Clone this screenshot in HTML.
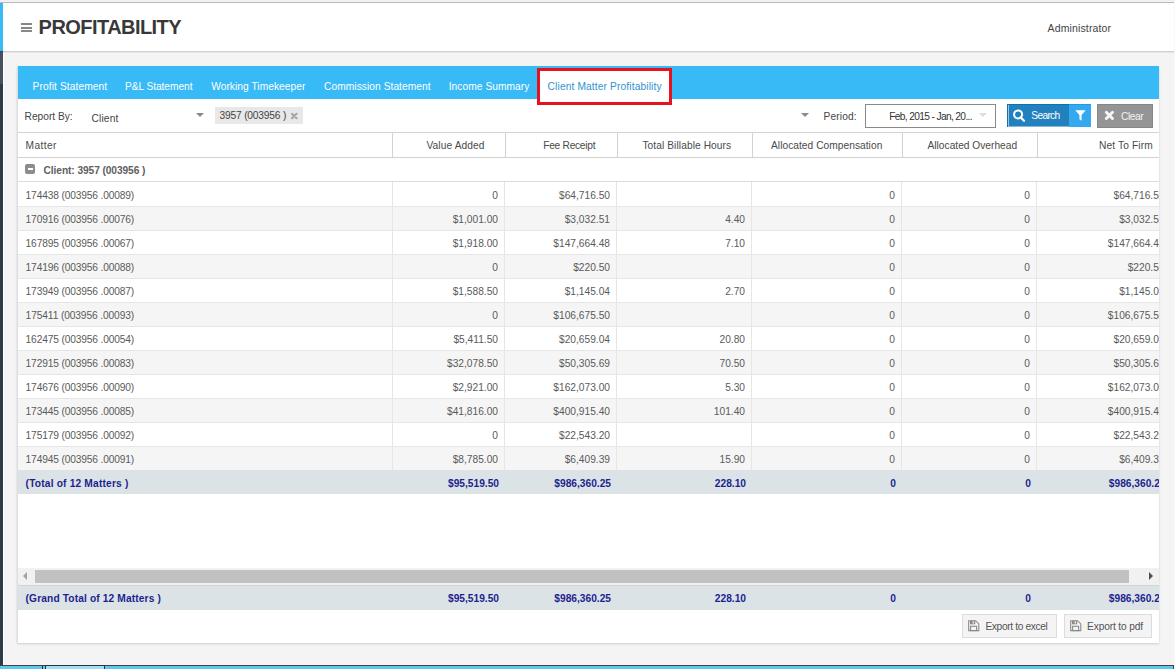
<!DOCTYPE html>
<html><head><meta charset="utf-8">
<style>
*{margin:0;padding:0;box-sizing:border-box}
html,body{width:1175px;height:669px;overflow:hidden}
body{background:#f4f4f4;font-family:"Liberation Sans",sans-serif;position:relative;color:#555}
.a{position:absolute}
.t{position:absolute;white-space:nowrap;font-size:10.2px;line-height:12px}
.g{position:absolute;left:18px;top:0;width:1141px;height:669px;overflow:hidden}
.g .t{}
</style></head><body>

<div class="a" style="left:0px;top:0px;width:1175px;height:1px;background:#f0f0f0"></div>
<div class="a" style="left:0px;top:1px;width:1175px;height:1px;background:#f5f5f5"></div>
<div class="a" style="left:0px;top:2px;width:1175px;height:1px;background:#b9b8ba"></div>
<div class="a" style="left:3px;top:3px;width:1172px;height:48px;background:#fff"></div>
<div class="a" style="left:3px;top:51px;width:1172px;height:1px;background:#d0d0d0"></div>
<div class="a" style="left:3px;top:52px;width:1172px;height:1px;background:#e6e6e6"></div>
<div class="a" style="left:0px;top:3px;width:3px;height:48px;background:#37baf5"></div>
<div class="a" style="left:0px;top:51px;width:3px;height:1px;background:#3b404c"></div>
<div class="a" style="left:0px;top:52px;width:3px;height:32px;background:#46525f"></div>
<div class="a" style="left:0px;top:84px;width:3px;height:581px;background:#2d3a47"></div>
<div class="a" style="left:3px;top:53px;width:1px;height:612px;background:#fff"></div>
<div class="a" style="left:20.5px;top:23px;width:11px;height:2px;background:#888"></div>
<div class="a" style="left:20.5px;top:27px;width:11px;height:2px;background:#888"></div>
<div class="a" style="left:20.5px;top:30px;width:11px;height:2px;background:#888"></div>
<div class="a" style="left:17px;top:66px;width:1142px;height:577px;background:#fff;box-shadow:0 1px 2px rgba(0,0,0,.16)"></div>
<div class="a" style="left:17px;top:66px;width:1px;height:577px;background:#dedede"></div>
<div class="a" style="left:18px;top:66px;width:1141px;height:33px;background:#37baf5"></div>
<div class="a" style="left:537px;top:68px;width:135px;height:37px;background:#fff;border:3px solid #e5131d"></div>
<div class="a" style="left:196px;top:113px;width:0;height:0;border-left:4px solid transparent;border-right:4px solid transparent;border-top:4px solid #8a8a8a"></div>
<div class="a" style="left:215px;top:107px;width:88px;height:17px;background:#e8e8e8"></div>
<svg class="a" style="left:290px;top:112px" width="9" height="8" viewBox="0 0 9 8"><path d="M2 1.8 L6.6 6.2 M6.6 1.8 L2 6.2" stroke="#a6a6a6" stroke-width="2.2" stroke-linecap="round"/></svg>
<div class="a" style="left:801px;top:113px;width:0;height:0;border-left:4px solid transparent;border-right:4px solid transparent;border-top:4px solid #8a8a8a"></div>
<div class="a" style="left:865px;top:104px;width:131px;height:24px;background:#fff;border:1px solid #8a8a8a"></div>
<div class="a" style="left:979px;top:113px;width:0;height:0;border-left:4px solid transparent;border-right:4px solid transparent;border-top:4px solid #dcdcdc"></div>
<div class="a" style="left:1007px;top:104px;width:62px;height:23px;background:#2180be"></div>
<div class="a" style="left:1007px;top:104px;width:1px;height:23px;background:#1b6da6"></div>
<div class="a" style="left:1008px;top:105px;width:1px;height:21px;background:rgba(255,255,255,.55)"></div>
<div class="a" style="left:1008px;top:126px;width:61px;height:1px;background:rgba(255,255,255,.45)"></div>
<div class="a" style="left:1007px;top:104px;width:62px;height:1px;background:#1a6fab"></div>
<svg class="a" style="left:1012px;top:109px" width="14" height="13" viewBox="0 0 14 13"><circle cx="6.1" cy="5.4" r="4" fill="none" stroke="#fff" stroke-width="2"/><line x1="8.5" y1="8.3" x2="12" y2="11.8" stroke="#fff" stroke-width="2.2" stroke-linecap="round"/></svg>
<div class="a" style="left:1069px;top:104px;width:22px;height:23px;background:#33aaf0"></div>
<div class="a" style="left:1069px;top:104px;width:22px;height:1px;background:#1d9be9"></div>
<svg class="a" style="left:1075px;top:109.6px" width="11" height="11" viewBox="0 0 11 11"><path d="M0.3 0.3 H10.7 L6.6 5 V10.7 L4.4 9.2 V5 Z" fill="#fff"/></svg>
<div class="a" style="left:1097px;top:104px;width:56px;height:24px;background:#959595;border:1px solid #878787"></div>
<svg class="a" style="left:1104px;top:110.3px" width="11" height="11" viewBox="0 0 11 11"><path d="M2.3 2.3 L8.5 8.5 M8.5 2.3 L2.3 8.5" stroke="#f6f6f6" stroke-width="2.9" stroke-linecap="round"/></svg>
<div class="a" style="left:962px;top:614px;width:95px;height:24px;background:#f4f4f4;border:1px solid #dcdcdc"></div>
<svg class="a" style="left:968px;top:620.3px" width="12" height="12" viewBox="0 0 12 12"><path d="M0.7 0.7 H7.6 L10.8 3.9 V10.6 H0.7 Z" fill="none" stroke="#8a8a8a" stroke-width="1.1"/><rect x="2" y="0.7" width="5.2" height="3.6" fill="#8a8a8a"/><rect x="4.6" y="1.3" width="1.3" height="2.2" fill="#f4f4f4"/><rect x="2.6" y="6.3" width="6" height="4.3" fill="none" stroke="#8a8a8a" stroke-width="1.1"/></svg>
<div class="a" style="left:1064px;top:614px;width:88px;height:24px;background:#f4f4f4;border:1px solid #dcdcdc"></div>
<svg class="a" style="left:1070px;top:620.3px" width="12" height="12" viewBox="0 0 12 12"><path d="M0.7 0.7 H7.6 L10.8 3.9 V10.6 H0.7 Z" fill="none" stroke="#8a8a8a" stroke-width="1.1"/><rect x="2" y="0.7" width="5.2" height="3.6" fill="#8a8a8a"/><rect x="4.6" y="1.3" width="1.3" height="2.2" fill="#f4f4f4"/><rect x="2.6" y="6.3" width="6" height="4.3" fill="none" stroke="#8a8a8a" stroke-width="1.1"/></svg>
<div class="a" style="left:0px;top:665px;width:1174px;height:1px;background:#3f4347"></div>
<div class="a" style="left:0px;top:666px;width:1175px;height:3px;background:#5ec8ea"></div>
<div class="a" style="left:1173px;top:665px;width:1px;height:4px;background:#444"></div>
<div class="a" style="left:1174px;top:0px;width:1px;height:669px;background:#f9f9f9"></div>
<div class="a" style="left:42px;top:666px;width:1px;height:3px;background:#2a3340"></div>
<div class="a" style="left:45px;top:665px;width:60px;height:4px;background:#9fe0f5;border:1px solid #2a3340;border-bottom:none"></div>
<div class="t" style="left:38.60px;top:21px;font-size:20px;font-weight:bold;color:#383838;letter-spacing:-0.552px;line-height:12px">PROFITABILITY</div>
<div class="t" style="left:1047.60px;top:22px;font-size:10.5px;font-weight:normal;color:#444;letter-spacing:0.128px;">Administrator</div>
<div class="t" style="left:32.60px;top:81px;font-size:10.2px;font-weight:normal;color:#fff;letter-spacing:0.097px;">Profit Statement</div>
<div class="t" style="left:124.90px;top:81px;font-size:10.2px;font-weight:normal;color:#fff;letter-spacing:-0.046px;">P&amp;L Statement</div>
<div class="t" style="left:211.20px;top:81px;font-size:10.2px;font-weight:normal;color:#fff;letter-spacing:0.057px;">Working Timekeeper</div>
<div class="t" style="left:324.10px;top:81px;font-size:10.2px;font-weight:normal;color:#fff;letter-spacing:0.062px;">Commission Statement</div>
<div class="t" style="left:448.70px;top:81px;font-size:10.2px;font-weight:normal;color:#fff;letter-spacing:0.067px;">Income Summary</div>
<div class="t" style="left:547.60px;top:81px;font-size:10.2px;font-weight:normal;color:#2f93cf;letter-spacing:0.138px;">Client Matter Profitability</div>
<div class="t" style="left:24.60px;top:111px;font-size:10.2px;font-weight:normal;color:#444;letter-spacing:-0.016px;">Report By:</div>
<div class="t" style="left:91.60px;top:113px;font-size:10.2px;font-weight:normal;color:#444;letter-spacing:0.131px;">Client</div>
<div class="t" style="left:219.60px;top:110px;font-size:10.2px;font-weight:normal;color:#444;letter-spacing:-0.185px;">3957 (003956 )</div>
<div class="t" style="left:823.60px;top:111px;font-size:10.2px;font-weight:normal;color:#444;letter-spacing:0.120px;">Period:</div>
<div class="t" style="left:889.20px;top:111px;font-size:10.2px;font-weight:normal;color:#333;letter-spacing:-0.640px;">Feb, 2015 - Jan, 20...</div>
<div class="t" style="left:1031.30px;top:110px;font-size:10.2px;font-weight:normal;color:#fff;letter-spacing:-0.676px;">Search</div>
<div class="t" style="left:1121.10px;top:111px;font-size:10.2px;font-weight:normal;color:#f2f2f2;letter-spacing:-0.465px;">Clear</div>
<div class="t" style="left:985.40px;top:621px;font-size:10.2px;font-weight:normal;color:#555;letter-spacing:-0.349px;">Export to excel</div>
<div class="t" style="left:1087.10px;top:621px;font-size:10.2px;font-weight:normal;color:#555;letter-spacing:-0.147px;">Export to pdf</div>
<div class="g">
<div class="a" style="left:0px;top:132px;width:1160px;height:1px;background:#d2d2d2"></div>
<div class="a" style="left:0px;top:157px;width:1160px;height:1px;background:#d2d2d2"></div>
<div class="a" style="left:374px;top:133px;width:1px;height:24px;background:#d2d2d2"></div>
<div class="a" style="left:487px;top:133px;width:1px;height:24px;background:#d2d2d2"></div>
<div class="a" style="left:599px;top:133px;width:1px;height:24px;background:#d2d2d2"></div>
<div class="a" style="left:734px;top:133px;width:1px;height:24px;background:#d2d2d2"></div>
<div class="a" style="left:884px;top:133px;width:1px;height:24px;background:#d2d2d2"></div>
<div class="a" style="left:1019px;top:133px;width:1px;height:24px;background:#d2d2d2"></div>
<div class="a" style="left:0px;top:181px;width:1160px;height:1px;background:#dcdcdc"></div>
<div class="a" style="left:7px;top:164px;width:10px;height:10px;background:#8c8c8c;border-radius:2px"></div>
<div class="a" style="left:10px;top:168px;width:5px;height:2px;background:#fff"></div>
<div class="a" style="left:0px;top:182px;width:1160px;height:24px;background:#fff"></div>
<div class="a" style="left:0px;top:206px;width:1160px;height:1px;background:#e6e6e6"></div>
<div class="a" style="left:374px;top:182px;width:1px;height:24px;background:#e6e6e6"></div>
<div class="a" style="left:486px;top:182px;width:1px;height:24px;background:#e6e6e6"></div>
<div class="a" style="left:598px;top:182px;width:1px;height:24px;background:#e6e6e6"></div>
<div class="a" style="left:733px;top:182px;width:1px;height:24px;background:#e6e6e6"></div>
<div class="a" style="left:883px;top:182px;width:1px;height:24px;background:#e6e6e6"></div>
<div class="a" style="left:1018px;top:182px;width:1px;height:24px;background:#e6e6e6"></div>
<div class="a" style="left:0px;top:207px;width:1160px;height:23px;background:#f5f5f5"></div>
<div class="a" style="left:0px;top:230px;width:1160px;height:1px;background:#e6e6e6"></div>
<div class="a" style="left:374px;top:207px;width:1px;height:23px;background:#e6e6e6"></div>
<div class="a" style="left:486px;top:207px;width:1px;height:23px;background:#e6e6e6"></div>
<div class="a" style="left:598px;top:207px;width:1px;height:23px;background:#e6e6e6"></div>
<div class="a" style="left:733px;top:207px;width:1px;height:23px;background:#e6e6e6"></div>
<div class="a" style="left:883px;top:207px;width:1px;height:23px;background:#e6e6e6"></div>
<div class="a" style="left:1018px;top:207px;width:1px;height:23px;background:#e6e6e6"></div>
<div class="a" style="left:0px;top:231px;width:1160px;height:23px;background:#fff"></div>
<div class="a" style="left:0px;top:254px;width:1160px;height:1px;background:#e6e6e6"></div>
<div class="a" style="left:374px;top:231px;width:1px;height:23px;background:#e6e6e6"></div>
<div class="a" style="left:486px;top:231px;width:1px;height:23px;background:#e6e6e6"></div>
<div class="a" style="left:598px;top:231px;width:1px;height:23px;background:#e6e6e6"></div>
<div class="a" style="left:733px;top:231px;width:1px;height:23px;background:#e6e6e6"></div>
<div class="a" style="left:883px;top:231px;width:1px;height:23px;background:#e6e6e6"></div>
<div class="a" style="left:1018px;top:231px;width:1px;height:23px;background:#e6e6e6"></div>
<div class="a" style="left:0px;top:255px;width:1160px;height:23px;background:#f5f5f5"></div>
<div class="a" style="left:0px;top:278px;width:1160px;height:1px;background:#e6e6e6"></div>
<div class="a" style="left:374px;top:255px;width:1px;height:23px;background:#e6e6e6"></div>
<div class="a" style="left:486px;top:255px;width:1px;height:23px;background:#e6e6e6"></div>
<div class="a" style="left:598px;top:255px;width:1px;height:23px;background:#e6e6e6"></div>
<div class="a" style="left:733px;top:255px;width:1px;height:23px;background:#e6e6e6"></div>
<div class="a" style="left:883px;top:255px;width:1px;height:23px;background:#e6e6e6"></div>
<div class="a" style="left:1018px;top:255px;width:1px;height:23px;background:#e6e6e6"></div>
<div class="a" style="left:0px;top:279px;width:1160px;height:23px;background:#fff"></div>
<div class="a" style="left:0px;top:302px;width:1160px;height:1px;background:#e6e6e6"></div>
<div class="a" style="left:374px;top:279px;width:1px;height:23px;background:#e6e6e6"></div>
<div class="a" style="left:486px;top:279px;width:1px;height:23px;background:#e6e6e6"></div>
<div class="a" style="left:598px;top:279px;width:1px;height:23px;background:#e6e6e6"></div>
<div class="a" style="left:733px;top:279px;width:1px;height:23px;background:#e6e6e6"></div>
<div class="a" style="left:883px;top:279px;width:1px;height:23px;background:#e6e6e6"></div>
<div class="a" style="left:1018px;top:279px;width:1px;height:23px;background:#e6e6e6"></div>
<div class="a" style="left:0px;top:303px;width:1160px;height:23px;background:#f5f5f5"></div>
<div class="a" style="left:0px;top:326px;width:1160px;height:1px;background:#e6e6e6"></div>
<div class="a" style="left:374px;top:303px;width:1px;height:23px;background:#e6e6e6"></div>
<div class="a" style="left:486px;top:303px;width:1px;height:23px;background:#e6e6e6"></div>
<div class="a" style="left:598px;top:303px;width:1px;height:23px;background:#e6e6e6"></div>
<div class="a" style="left:733px;top:303px;width:1px;height:23px;background:#e6e6e6"></div>
<div class="a" style="left:883px;top:303px;width:1px;height:23px;background:#e6e6e6"></div>
<div class="a" style="left:1018px;top:303px;width:1px;height:23px;background:#e6e6e6"></div>
<div class="a" style="left:0px;top:327px;width:1160px;height:23px;background:#fff"></div>
<div class="a" style="left:0px;top:350px;width:1160px;height:1px;background:#e6e6e6"></div>
<div class="a" style="left:374px;top:327px;width:1px;height:23px;background:#e6e6e6"></div>
<div class="a" style="left:486px;top:327px;width:1px;height:23px;background:#e6e6e6"></div>
<div class="a" style="left:598px;top:327px;width:1px;height:23px;background:#e6e6e6"></div>
<div class="a" style="left:733px;top:327px;width:1px;height:23px;background:#e6e6e6"></div>
<div class="a" style="left:883px;top:327px;width:1px;height:23px;background:#e6e6e6"></div>
<div class="a" style="left:1018px;top:327px;width:1px;height:23px;background:#e6e6e6"></div>
<div class="a" style="left:0px;top:351px;width:1160px;height:23px;background:#f5f5f5"></div>
<div class="a" style="left:0px;top:374px;width:1160px;height:1px;background:#e6e6e6"></div>
<div class="a" style="left:374px;top:351px;width:1px;height:23px;background:#e6e6e6"></div>
<div class="a" style="left:486px;top:351px;width:1px;height:23px;background:#e6e6e6"></div>
<div class="a" style="left:598px;top:351px;width:1px;height:23px;background:#e6e6e6"></div>
<div class="a" style="left:733px;top:351px;width:1px;height:23px;background:#e6e6e6"></div>
<div class="a" style="left:883px;top:351px;width:1px;height:23px;background:#e6e6e6"></div>
<div class="a" style="left:1018px;top:351px;width:1px;height:23px;background:#e6e6e6"></div>
<div class="a" style="left:0px;top:375px;width:1160px;height:23px;background:#fff"></div>
<div class="a" style="left:0px;top:398px;width:1160px;height:1px;background:#e6e6e6"></div>
<div class="a" style="left:374px;top:375px;width:1px;height:23px;background:#e6e6e6"></div>
<div class="a" style="left:486px;top:375px;width:1px;height:23px;background:#e6e6e6"></div>
<div class="a" style="left:598px;top:375px;width:1px;height:23px;background:#e6e6e6"></div>
<div class="a" style="left:733px;top:375px;width:1px;height:23px;background:#e6e6e6"></div>
<div class="a" style="left:883px;top:375px;width:1px;height:23px;background:#e6e6e6"></div>
<div class="a" style="left:1018px;top:375px;width:1px;height:23px;background:#e6e6e6"></div>
<div class="a" style="left:0px;top:399px;width:1160px;height:23px;background:#f5f5f5"></div>
<div class="a" style="left:0px;top:422px;width:1160px;height:1px;background:#e6e6e6"></div>
<div class="a" style="left:374px;top:399px;width:1px;height:23px;background:#e6e6e6"></div>
<div class="a" style="left:486px;top:399px;width:1px;height:23px;background:#e6e6e6"></div>
<div class="a" style="left:598px;top:399px;width:1px;height:23px;background:#e6e6e6"></div>
<div class="a" style="left:733px;top:399px;width:1px;height:23px;background:#e6e6e6"></div>
<div class="a" style="left:883px;top:399px;width:1px;height:23px;background:#e6e6e6"></div>
<div class="a" style="left:1018px;top:399px;width:1px;height:23px;background:#e6e6e6"></div>
<div class="a" style="left:0px;top:423px;width:1160px;height:23px;background:#fff"></div>
<div class="a" style="left:0px;top:446px;width:1160px;height:1px;background:#e6e6e6"></div>
<div class="a" style="left:374px;top:423px;width:1px;height:23px;background:#e6e6e6"></div>
<div class="a" style="left:486px;top:423px;width:1px;height:23px;background:#e6e6e6"></div>
<div class="a" style="left:598px;top:423px;width:1px;height:23px;background:#e6e6e6"></div>
<div class="a" style="left:733px;top:423px;width:1px;height:23px;background:#e6e6e6"></div>
<div class="a" style="left:883px;top:423px;width:1px;height:23px;background:#e6e6e6"></div>
<div class="a" style="left:1018px;top:423px;width:1px;height:23px;background:#e6e6e6"></div>
<div class="a" style="left:0px;top:447px;width:1160px;height:23px;background:#f5f5f5"></div>
<div class="a" style="left:0px;top:470px;width:1160px;height:1px;background:#e6e6e6"></div>
<div class="a" style="left:374px;top:447px;width:1px;height:23px;background:#e6e6e6"></div>
<div class="a" style="left:486px;top:447px;width:1px;height:23px;background:#e6e6e6"></div>
<div class="a" style="left:598px;top:447px;width:1px;height:23px;background:#e6e6e6"></div>
<div class="a" style="left:733px;top:447px;width:1px;height:23px;background:#e6e6e6"></div>
<div class="a" style="left:883px;top:447px;width:1px;height:23px;background:#e6e6e6"></div>
<div class="a" style="left:1018px;top:447px;width:1px;height:23px;background:#e6e6e6"></div>
<div class="a" style="left:0px;top:470px;width:1160px;height:24px;background:#dce3e6"></div>
<div class="a" style="left:0px;top:568px;width:1160px;height:17px;background:#f1f1f1"></div>
<div class="a" style="left:17px;top:570px;width:1094px;height:13px;background:#c1c1c1"></div>
<div class="a" style="left:5px;top:572px;width:0;height:0;border-top:4px solid transparent;border-bottom:4px solid transparent;border-right:4px solid #a3a3a3"></div>
<div class="a" style="left:1131px;top:572px;width:0;height:0;border-top:4px solid transparent;border-bottom:4px solid transparent;border-left:4px solid #505050"></div>
<div class="a" style="left:0px;top:585px;width:1160px;height:1px;background:#d4d4d4"></div>
<div class="a" style="left:0px;top:586px;width:1160px;height:24px;background:#dce3e6"></div>
<div class="t" style="left:7.60px;top:140px;font-size:10.2px;font-weight:normal;color:#4a4a4a;letter-spacing:0.385px;">Matter</div>
<div class="t" style="right:674.39px;top:140px;font-size:10.2px;font-weight:normal;color:#4a4a4a;letter-spacing:0.107px;">Value Added</div>
<div class="t" style="right:563.76px;top:140px;font-size:10.2px;font-weight:normal;color:#4a4a4a;letter-spacing:-0.264px;">Fee Receipt</div>
<div class="t" style="right:427.72px;top:140px;font-size:10.2px;font-weight:normal;color:#4a4a4a;letter-spacing:0.084px;">Total Billable Hours</div>
<div class="t" style="right:276.66px;top:140px;font-size:10.2px;font-weight:normal;color:#4a4a4a;letter-spacing:0.041px;">Allocated Compensation</div>
<div class="t" style="right:141.89px;top:140px;font-size:10.2px;font-weight:normal;color:#4a4a4a;letter-spacing:0.007px;">Allocated Overhead</div>
<div class="t" style="right:6.17px;top:140px;font-size:10.2px;font-weight:normal;color:#4a4a4a;letter-spacing:0.135px;">Net To Firm</div>
<div class="t" style="left:25.60px;top:165px;font-size:10.2px;font-weight:bold;color:#606060;letter-spacing:-0.088px;">Client: 3957 (003956 )</div>
<div class="t" style="left:7.60px;top:190px;font-size:10.2px;font-weight:normal;color:#5a5a5a;letter-spacing:-0.143px;">174438 (003956 .00089)</div>
<div class="t" style="right:661.00px;top:190px;font-size:10.2px;font-weight:normal;color:#5a5a5a;">0</div>
<div class="t" style="right:549.00px;top:190px;font-size:10.2px;font-weight:normal;color:#5a5a5a;">$64,716.50</div>
<div class="t" style="right:264.00px;top:190px;font-size:10.2px;font-weight:normal;color:#5a5a5a;">0</div>
<div class="t" style="right:129.00px;top:190px;font-size:10.2px;font-weight:normal;color:#5a5a5a;">0</div>
<div class="t" style="right:-5.50px;top:190px;font-size:10.2px;font-weight:normal;color:#5a5a5a;">$64,716.50</div>
<div class="t" style="left:7.60px;top:214px;font-size:10.2px;font-weight:normal;color:#5a5a5a;letter-spacing:-0.143px;">170916 (003956 .00076)</div>
<div class="t" style="right:661.00px;top:214px;font-size:10.2px;font-weight:normal;color:#5a5a5a;">$1,001.00</div>
<div class="t" style="right:549.00px;top:214px;font-size:10.2px;font-weight:normal;color:#5a5a5a;">$3,032.51</div>
<div class="t" style="right:414.00px;top:214px;font-size:10.2px;font-weight:normal;color:#5a5a5a;">4.40</div>
<div class="t" style="right:264.00px;top:214px;font-size:10.2px;font-weight:normal;color:#5a5a5a;">0</div>
<div class="t" style="right:129.00px;top:214px;font-size:10.2px;font-weight:normal;color:#5a5a5a;">0</div>
<div class="t" style="right:-5.50px;top:214px;font-size:10.2px;font-weight:normal;color:#5a5a5a;">$3,032.51</div>
<div class="t" style="left:7.60px;top:238px;font-size:10.2px;font-weight:normal;color:#5a5a5a;letter-spacing:-0.143px;">167895 (003956 .00067)</div>
<div class="t" style="right:661.00px;top:238px;font-size:10.2px;font-weight:normal;color:#5a5a5a;">$1,918.00</div>
<div class="t" style="right:549.00px;top:238px;font-size:10.2px;font-weight:normal;color:#5a5a5a;">$147,664.48</div>
<div class="t" style="right:414.00px;top:238px;font-size:10.2px;font-weight:normal;color:#5a5a5a;">7.10</div>
<div class="t" style="right:264.00px;top:238px;font-size:10.2px;font-weight:normal;color:#5a5a5a;">0</div>
<div class="t" style="right:129.00px;top:238px;font-size:10.2px;font-weight:normal;color:#5a5a5a;">0</div>
<div class="t" style="right:-5.50px;top:238px;font-size:10.2px;font-weight:normal;color:#5a5a5a;">$147,664.48</div>
<div class="t" style="left:7.60px;top:262px;font-size:10.2px;font-weight:normal;color:#5a5a5a;letter-spacing:-0.143px;">174196 (003956 .00088)</div>
<div class="t" style="right:661.00px;top:262px;font-size:10.2px;font-weight:normal;color:#5a5a5a;">0</div>
<div class="t" style="right:549.00px;top:262px;font-size:10.2px;font-weight:normal;color:#5a5a5a;">$220.50</div>
<div class="t" style="right:264.00px;top:262px;font-size:10.2px;font-weight:normal;color:#5a5a5a;">0</div>
<div class="t" style="right:129.00px;top:262px;font-size:10.2px;font-weight:normal;color:#5a5a5a;">0</div>
<div class="t" style="right:-5.50px;top:262px;font-size:10.2px;font-weight:normal;color:#5a5a5a;">$220.50</div>
<div class="t" style="left:7.60px;top:286px;font-size:10.2px;font-weight:normal;color:#5a5a5a;letter-spacing:-0.143px;">173949 (003956 .00087)</div>
<div class="t" style="right:661.00px;top:286px;font-size:10.2px;font-weight:normal;color:#5a5a5a;">$1,588.50</div>
<div class="t" style="right:549.00px;top:286px;font-size:10.2px;font-weight:normal;color:#5a5a5a;">$1,145.04</div>
<div class="t" style="right:414.00px;top:286px;font-size:10.2px;font-weight:normal;color:#5a5a5a;">2.70</div>
<div class="t" style="right:264.00px;top:286px;font-size:10.2px;font-weight:normal;color:#5a5a5a;">0</div>
<div class="t" style="right:129.00px;top:286px;font-size:10.2px;font-weight:normal;color:#5a5a5a;">0</div>
<div class="t" style="right:-5.50px;top:286px;font-size:10.2px;font-weight:normal;color:#5a5a5a;">$1,145.04</div>
<div class="t" style="left:7.60px;top:310px;font-size:10.2px;font-weight:normal;color:#5a5a5a;letter-spacing:-0.107px;">175411 (003956 .00093)</div>
<div class="t" style="right:661.00px;top:310px;font-size:10.2px;font-weight:normal;color:#5a5a5a;">0</div>
<div class="t" style="right:549.00px;top:310px;font-size:10.2px;font-weight:normal;color:#5a5a5a;">$106,675.50</div>
<div class="t" style="right:264.00px;top:310px;font-size:10.2px;font-weight:normal;color:#5a5a5a;">0</div>
<div class="t" style="right:129.00px;top:310px;font-size:10.2px;font-weight:normal;color:#5a5a5a;">0</div>
<div class="t" style="right:-5.50px;top:310px;font-size:10.2px;font-weight:normal;color:#5a5a5a;">$106,675.50</div>
<div class="t" style="left:7.60px;top:334px;font-size:10.2px;font-weight:normal;color:#5a5a5a;letter-spacing:-0.143px;">162475 (003956 .00054)</div>
<div class="t" style="right:661.00px;top:334px;font-size:10.2px;font-weight:normal;color:#5a5a5a;">$5,411.50</div>
<div class="t" style="right:549.00px;top:334px;font-size:10.2px;font-weight:normal;color:#5a5a5a;">$20,659.04</div>
<div class="t" style="right:414.00px;top:334px;font-size:10.2px;font-weight:normal;color:#5a5a5a;">20.80</div>
<div class="t" style="right:264.00px;top:334px;font-size:10.2px;font-weight:normal;color:#5a5a5a;">0</div>
<div class="t" style="right:129.00px;top:334px;font-size:10.2px;font-weight:normal;color:#5a5a5a;">0</div>
<div class="t" style="right:-5.50px;top:334px;font-size:10.2px;font-weight:normal;color:#5a5a5a;">$20,659.04</div>
<div class="t" style="left:7.60px;top:358px;font-size:10.2px;font-weight:normal;color:#5a5a5a;letter-spacing:-0.143px;">172915 (003956 .00083)</div>
<div class="t" style="right:661.00px;top:358px;font-size:10.2px;font-weight:normal;color:#5a5a5a;">$32,078.50</div>
<div class="t" style="right:549.00px;top:358px;font-size:10.2px;font-weight:normal;color:#5a5a5a;">$50,305.69</div>
<div class="t" style="right:414.00px;top:358px;font-size:10.2px;font-weight:normal;color:#5a5a5a;">70.50</div>
<div class="t" style="right:264.00px;top:358px;font-size:10.2px;font-weight:normal;color:#5a5a5a;">0</div>
<div class="t" style="right:129.00px;top:358px;font-size:10.2px;font-weight:normal;color:#5a5a5a;">0</div>
<div class="t" style="right:-5.50px;top:358px;font-size:10.2px;font-weight:normal;color:#5a5a5a;">$50,305.69</div>
<div class="t" style="left:7.60px;top:382px;font-size:10.2px;font-weight:normal;color:#5a5a5a;letter-spacing:-0.143px;">174676 (003956 .00090)</div>
<div class="t" style="right:661.00px;top:382px;font-size:10.2px;font-weight:normal;color:#5a5a5a;">$2,921.00</div>
<div class="t" style="right:549.00px;top:382px;font-size:10.2px;font-weight:normal;color:#5a5a5a;">$162,073.00</div>
<div class="t" style="right:414.00px;top:382px;font-size:10.2px;font-weight:normal;color:#5a5a5a;">5.30</div>
<div class="t" style="right:264.00px;top:382px;font-size:10.2px;font-weight:normal;color:#5a5a5a;">0</div>
<div class="t" style="right:129.00px;top:382px;font-size:10.2px;font-weight:normal;color:#5a5a5a;">0</div>
<div class="t" style="right:-5.50px;top:382px;font-size:10.2px;font-weight:normal;color:#5a5a5a;">$162,073.00</div>
<div class="t" style="left:7.60px;top:406px;font-size:10.2px;font-weight:normal;color:#5a5a5a;letter-spacing:-0.143px;">173445 (003956 .00085)</div>
<div class="t" style="right:661.00px;top:406px;font-size:10.2px;font-weight:normal;color:#5a5a5a;">$41,816.00</div>
<div class="t" style="right:549.00px;top:406px;font-size:10.2px;font-weight:normal;color:#5a5a5a;">$400,915.40</div>
<div class="t" style="right:414.00px;top:406px;font-size:10.2px;font-weight:normal;color:#5a5a5a;">101.40</div>
<div class="t" style="right:264.00px;top:406px;font-size:10.2px;font-weight:normal;color:#5a5a5a;">0</div>
<div class="t" style="right:129.00px;top:406px;font-size:10.2px;font-weight:normal;color:#5a5a5a;">0</div>
<div class="t" style="right:-5.50px;top:406px;font-size:10.2px;font-weight:normal;color:#5a5a5a;">$400,915.40</div>
<div class="t" style="left:7.60px;top:430px;font-size:10.2px;font-weight:normal;color:#5a5a5a;letter-spacing:-0.143px;">175179 (003956 .00092)</div>
<div class="t" style="right:661.00px;top:430px;font-size:10.2px;font-weight:normal;color:#5a5a5a;">0</div>
<div class="t" style="right:549.00px;top:430px;font-size:10.2px;font-weight:normal;color:#5a5a5a;">$22,543.20</div>
<div class="t" style="right:264.00px;top:430px;font-size:10.2px;font-weight:normal;color:#5a5a5a;">0</div>
<div class="t" style="right:129.00px;top:430px;font-size:10.2px;font-weight:normal;color:#5a5a5a;">0</div>
<div class="t" style="right:-5.50px;top:430px;font-size:10.2px;font-weight:normal;color:#5a5a5a;">$22,543.20</div>
<div class="t" style="left:7.60px;top:454px;font-size:10.2px;font-weight:normal;color:#5a5a5a;letter-spacing:-0.143px;">174945 (003956 .00091)</div>
<div class="t" style="right:661.00px;top:454px;font-size:10.2px;font-weight:normal;color:#5a5a5a;">$8,785.00</div>
<div class="t" style="right:549.00px;top:454px;font-size:10.2px;font-weight:normal;color:#5a5a5a;">$6,409.39</div>
<div class="t" style="right:414.00px;top:454px;font-size:10.2px;font-weight:normal;color:#5a5a5a;">15.90</div>
<div class="t" style="right:264.00px;top:454px;font-size:10.2px;font-weight:normal;color:#5a5a5a;">0</div>
<div class="t" style="right:129.00px;top:454px;font-size:10.2px;font-weight:normal;color:#5a5a5a;">0</div>
<div class="t" style="right:-5.50px;top:454px;font-size:10.2px;font-weight:normal;color:#5a5a5a;">$6,409.39</div>
<div class="t" style="left:7.60px;top:478px;font-size:10.2px;font-weight:bold;color:#1d1f8f;letter-spacing:0.182px;">(Total of 12 Matters )</div>
<div class="t" style="right:660.00px;top:478px;font-size:10.2px;font-weight:bold;color:#1d1f8f;">$95,519.50</div>
<div class="t" style="right:548.00px;top:478px;font-size:10.2px;font-weight:bold;color:#1d1f8f;">$986,360.25</div>
<div class="t" style="right:413.00px;top:478px;font-size:10.2px;font-weight:bold;color:#1d1f8f;">228.10</div>
<div class="t" style="right:263.00px;top:478px;font-size:10.2px;font-weight:bold;color:#1d1f8f;">0</div>
<div class="t" style="right:128.00px;top:478px;font-size:10.2px;font-weight:bold;color:#1d1f8f;">0</div>
<div class="t" style="right:-6.50px;top:478px;font-size:10.2px;font-weight:bold;color:#1d1f8f;">$986,360.25</div>
<div class="t" style="left:7.60px;top:593px;font-size:10.2px;font-weight:bold;color:#1d1f8f;letter-spacing:0.130px;">(Grand Total of 12 Matters )</div>
<div class="t" style="right:660.00px;top:593px;font-size:10.2px;font-weight:bold;color:#1d1f8f;">$95,519.50</div>
<div class="t" style="right:548.00px;top:593px;font-size:10.2px;font-weight:bold;color:#1d1f8f;">$986,360.25</div>
<div class="t" style="right:413.00px;top:593px;font-size:10.2px;font-weight:bold;color:#1d1f8f;">228.10</div>
<div class="t" style="right:263.00px;top:593px;font-size:10.2px;font-weight:bold;color:#1d1f8f;">0</div>
<div class="t" style="right:128.00px;top:593px;font-size:10.2px;font-weight:bold;color:#1d1f8f;">0</div>
<div class="t" style="right:-6.50px;top:593px;font-size:10.2px;font-weight:bold;color:#1d1f8f;">$986,360.25</div>
</div>
</body></html>
